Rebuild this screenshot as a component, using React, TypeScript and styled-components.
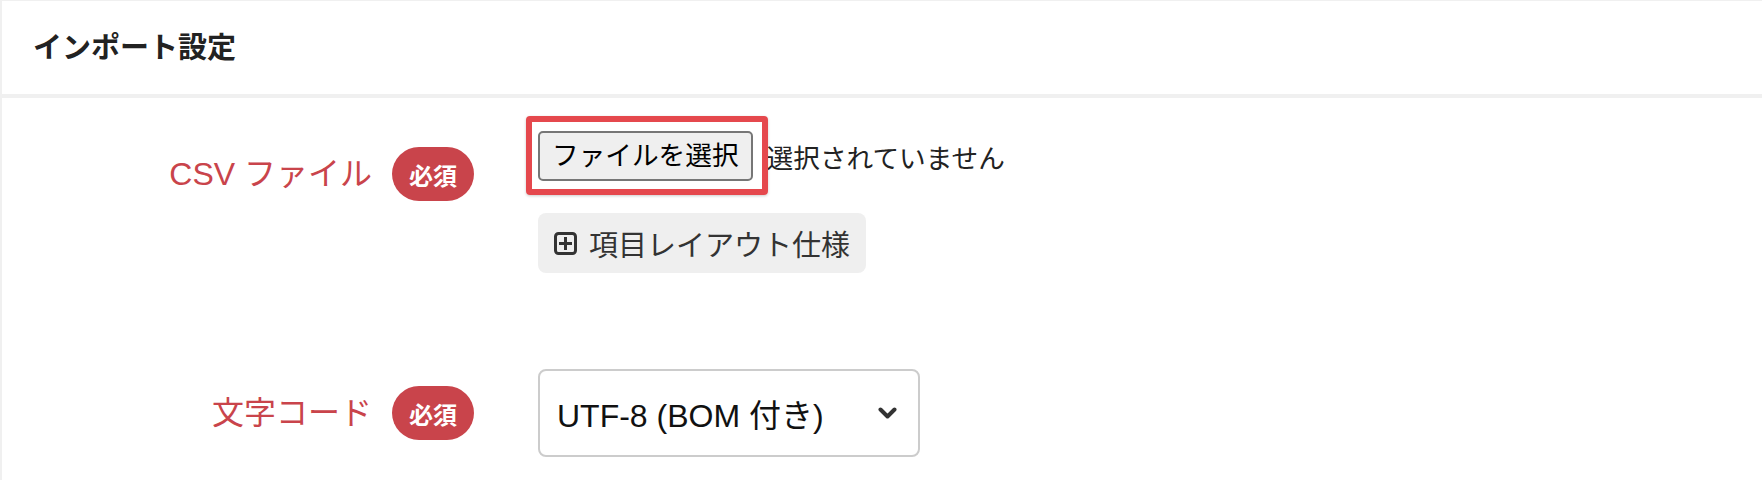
import React from "react";
import styled, { createGlobalStyle } from "styled-components";

const GlobalStyle = createGlobalStyle`
  html, body {
    margin: 0;
    padding: 0;
    background: #f0f0f0;
  }
  body {
    font-family: "Liberation Sans", "Noto Sans CJK JP", sans-serif;
    color: #222;
  }
  * { box-sizing: border-box; }
`;

const Page = styled.div`
  min-height: 480px;
  padding: 1px 0 0 2px;
  display: flex;
  flex-direction: column;
  gap: 4px;
`;

const Header = styled.header`
  height: 93px;
  background: #fff;
  display: flex;
  align-items: center;
  padding-left: 31px;
`;

const Title = styled.h1`
  margin: 0;
  font-size: 29px;
  font-weight: 700;
  color: #222;
  letter-spacing: 0;
  line-height: 1;
  padding-top: 2px;
`;

const Body = styled.section`
  flex: 1;
  background: #fff;
  padding: 32px 0;
  display: flex;
  flex-direction: column;
  gap: 96px;
`;

const Row = styled.div`
  display: grid;
  grid-template-columns: 472px 1fr;
  column-gap: 64px;
  align-items: start;
`;

const LabelCell = styled.div`
  height: 88px;
  display: flex;
  justify-content: flex-end;
  align-items: center;
  gap: 20px;
`;

const LabelText = styled.span`
  font-size: 32px;
  color: #c9444b;
  line-height: 1;
`;

const Badge = styled.span`
  height: 54px;
  padding: 0 17px;
  border-radius: 27px;
  background: #c9444b;
  color: #fff;
  font-size: 24px;
  font-weight: 700;
  display: inline-flex;
  align-items: center;
`;

const FieldCell = styled.div`
  display: flex;
  flex-direction: column;
  align-items: flex-start;
`;

const FileRow = styled.div`
  height: 52px;
  display: flex;
  align-items: center;
`;

const FileButtonWrap = styled.span`
  position: relative;
  display: inline-flex;
`;

const FileButton = styled.button`
  height: 50px;
  padding: 0 12px;
  border: 2px solid #767676;
  border-radius: 5px;
  background: #efefef;
  color: #000;
  font-family: "Liberation Sans", "Noto Sans CJK JP", sans-serif;
  font-size: 26.67px;
  line-height: 1;
  cursor: pointer;
`;

const Highlight = styled.span`
  position: absolute;
  top: -15px;
  left: -12px;
  right: -15px;
  bottom: -14px;
  border: 6px solid #e5484d;
  border-radius: 4px;
  box-shadow: 0 1px 3px rgba(0, 0, 0, 0.2);
  pointer-events: none;
`;

const FileStatus = styled.span`
  margin-left: 14px;
  font-size: 26.67px;
  color: #222;
`;

const SpecButton = styled.button`
  margin-top: 31px;
  height: 60px;
  padding: 0 16px;
  border: none;
  border-radius: 8px;
  background: #efefef;
  color: #333;
  display: inline-flex;
  align-items: center;
  gap: 12px;
  font-family: "Liberation Sans", "Noto Sans CJK JP", sans-serif;
  font-size: 29px;
  cursor: pointer;
`;

const Select = styled.div`
  width: 382px;
  height: 88px;
  border: 2px solid #cccccc;
  border-radius: 8px;
  background: #fff;
  display: flex;
  align-items: center;
  justify-content: space-between;
  padding: 0 21px 0 17px;
  font-size: 32px;
  color: #111;
`;

const PlusSquareIcon = () => (
  <svg width="23" height="23" viewBox="0 0 23 23" fill="none">
    <rect x="1.5" y="1.5" width="20" height="20" rx="3" stroke="#333" strokeWidth="3" />
    <path d="M11.5 6.5v10M6.5 11.5h10" stroke="#333" strokeWidth="3" strokeLinecap="square" />
  </svg>
);

const ChevronIcon = () => (
  <svg width="19" height="12" viewBox="0 0 19 12" fill="none">
    <path d="M2.5 2.5l7 7 7-7" stroke="#333" strokeWidth="4" strokeLinecap="round" strokeLinejoin="round" />
  </svg>
);

export default function App() {
  return (
    <>
      <GlobalStyle />
      <Page>
        <Header>
          <Title>インポート設定</Title>
        </Header>
        <Body>
          <Row>
            <LabelCell>
              <LabelText>CSV ファイル</LabelText>
              <Badge>必須</Badge>
            </LabelCell>
            <FieldCell>
              <FileRow>
                <FileButtonWrap>
                  <FileButton type="button">ファイルを選択</FileButton>
                  <Highlight />
                </FileButtonWrap>
                <FileStatus>選択されていません</FileStatus>
              </FileRow>
              <SpecButton type="button">
                <PlusSquareIcon />
                項目レイアウト仕様
              </SpecButton>
            </FieldCell>
          </Row>
          <Row>
            <LabelCell>
              <LabelText>文字コード</LabelText>
              <Badge>必須</Badge>
            </LabelCell>
            <FieldCell>
              <Select>
                <span>UTF-8 (BOM 付き)</span>
                <ChevronIcon />
              </Select>
            </FieldCell>
          </Row>
        </Body>
      </Page>
    </>
  );
}
